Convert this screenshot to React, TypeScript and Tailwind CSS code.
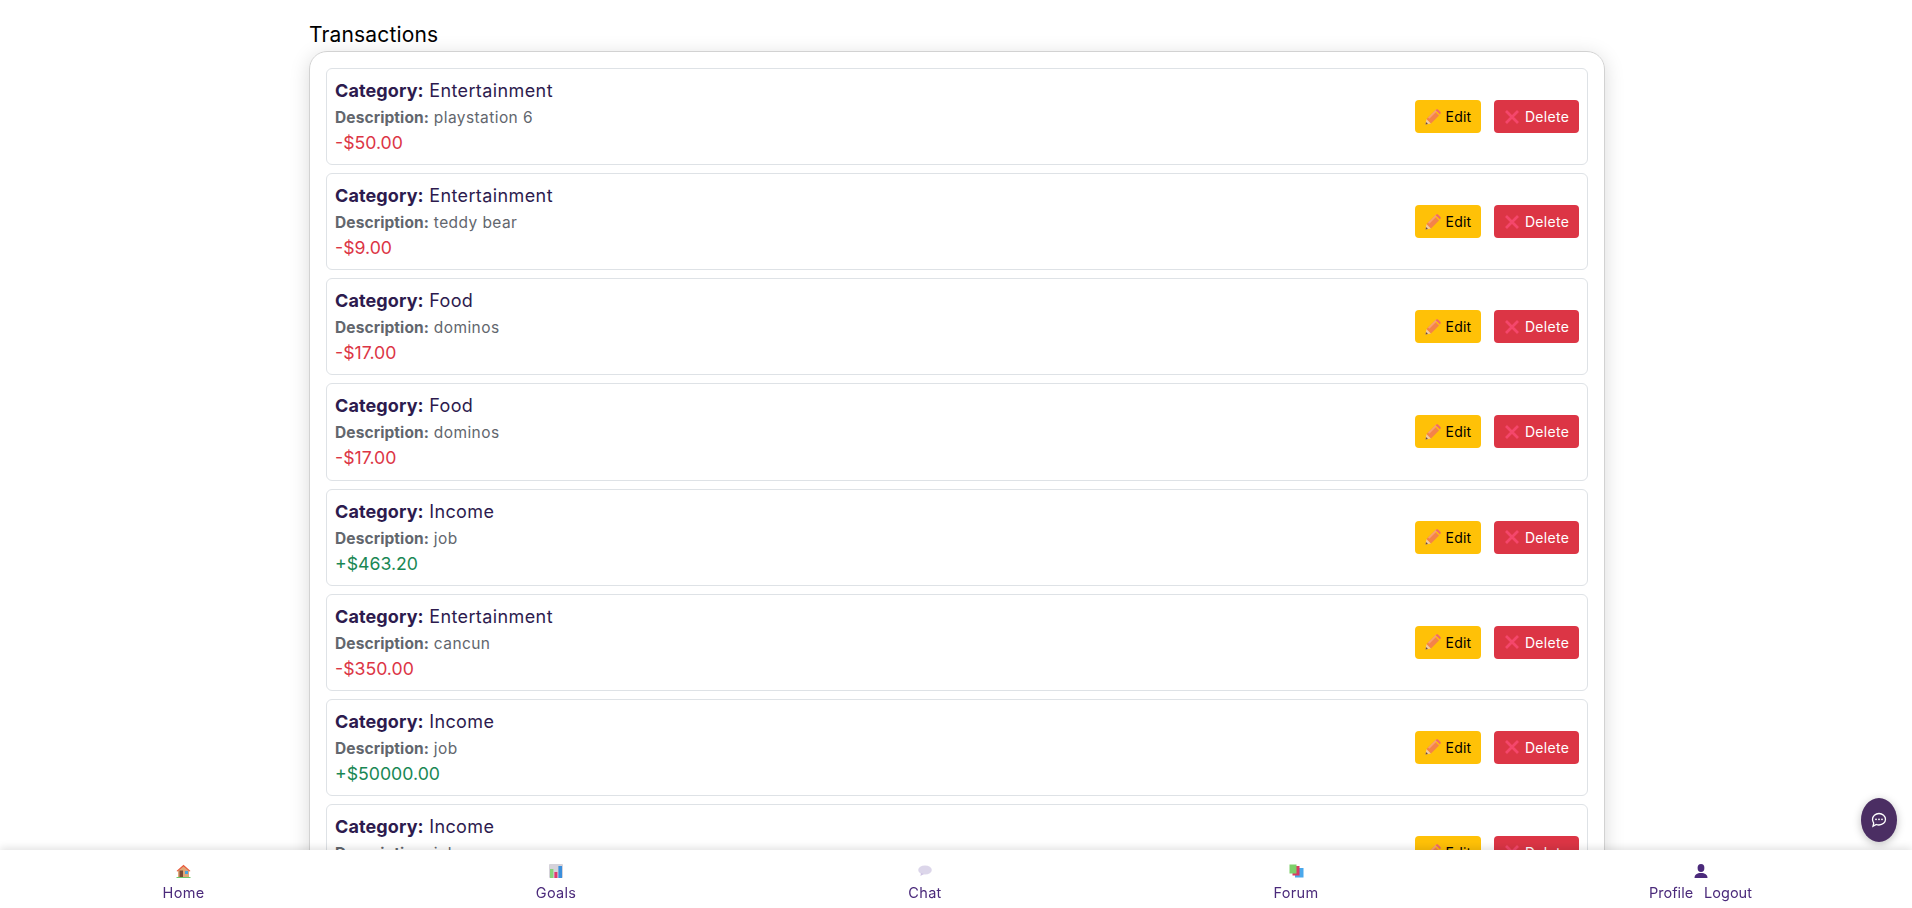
const FONT = "font-['Inter',sans-serif]";

const TRANSACTIONS = [
  { category: 'Entertainment', description: 'playstation 6', amount: '-$50.00', income: false },
  { category: 'Entertainment', description: 'teddy bear', amount: '-$9.00', income: false },
  { category: 'Food', description: 'dominos', amount: '-$17.00', income: false },
  { category: 'Food', description: 'dominos', amount: '-$17.00', income: false },
  { category: 'Income', description: 'job', amount: '+$463.20', income: true },
  { category: 'Entertainment', description: 'cancun', amount: '-$350.00', income: false },
  { category: 'Income', description: 'job', amount: '+$50000.00', income: true },
  { category: 'Income', description: 'job', amount: '+$463.20', income: true },
];

function PencilIcon() {
  return (
    <svg width="16" height="16" viewBox="0 0 16 16" className="shrink-0">
      <path d="M0.500 15.500l1-5.500 4.500 4.500z" fill="#f3c9a0" />
      <path d="M0.500 15.500l.5-2.500 2 2z" fill="#6b4a3a" />
      <path d="M1.500 10L9.500 2l4.500 4.500-8 8z" fill="#f4834a" />
      <path d="M3 8.500L11 .5l1.300 1.300-8 8z" fill="#f9a36e" />
      <path d="M10.500 1l1-.6c.5-.3 1.100-.3 1.500.1l2.500 2.500c.4.4.4 1 .1 1.500l-.6 1z" fill="#ef6a6a" />
    </svg>
  );
}

function CrossIcon() {
  return (
    <svg width="16" height="16" viewBox="0 0 16 16" className="shrink-0">
      <path d="M2 2l12 12M14 2L2 14" stroke="#f4476b" strokeWidth="2.800" />
    </svg>
  );
}

function HomeIcon() {
  return (
    <svg width="15" height="14" viewBox="0 0 15 14">
      <path d="M2 6.500L7.500 2 13 6.500V13H2z" fill="#e0a878" />
      <path d="M0.500 7L7.500 0.800 14.500 7l-1 .6L7.500 2.400 1.500 7.600z" fill="#e8593a" />
      <rect x="3.500" y="6.500" width="3.500" height="6.500" fill="#7a4a35" />
      <rect x="9" y="7" width="3" height="3" fill="#4aa3e0" />
      <rect x="0.500" y="13" width="14" height="1" fill="#6cc96c" />
    </svg>
  );
}

function ChartIcon() {
  return (
    <svg width="14" height="14" viewBox="0 0 14 14">
      <rect width="14" height="14" rx="1" fill="#d5d2da" />
      <rect x="1" y="5" width="3.400" height="9" fill="#86d47a" />
      <rect x="5.400" y="8" width="3" height="6" fill="#e0386f" />
      <rect x="9.400" y="2" width="3.600" height="12" fill="#3a8fdc" />
    </svg>
  );
}

function BalloonIcon() {
  return (
    <svg width="14" height="12" viewBox="0 0 14 12">
      <ellipse cx="7" cy="5" rx="6.800" ry="4.600" fill="#dcd6ea" />
      <path d="M3 8l-.6 3L6 9z" fill="#cfc4e4" />
    </svg>
  );
}

function BooksIcon() {
  return (
    <svg width="15" height="14" viewBox="0 0 15 14">
      <rect x="6" y="4" width="8.500" height="9.500" fill="#4aa8ec" />
      <rect x="3.500" y="2" width="7" height="9.500" fill="#d93a63" />
      <rect x="0.500" y="0.500" width="7" height="9" fill="#7ed06a" />
    </svg>
  );
}

function PersonIcon() {
  return (
    <svg width="14" height="14" viewBox="0 0 14 14">
      <ellipse cx="7" cy="4" rx="3.400" ry="4" fill="#4b2a7b" />
      <path d="M0.500 14c0-3.200 2.600-5 6.500-5s6.500 1.800 6.500 5z" fill="#4b2a7b" />
    </svg>
  );
}

function NavItem({ icon, label, width }: { icon: React.ReactNode; label: string; width: string }) {
  return (
    <div className={`flex flex-col items-center ${width}`}>
      <div className="flex h-[18px] items-center">{icon}</div>
      <span className="mt-[2px] whitespace-nowrap text-[14.5px] leading-[21px] tracking-[0.3px] text-[#4b2a7b]">{label}</span>
    </div>
  );
}

export default function App() {
  return (
    <div className={`h-screen overflow-hidden bg-white ${FONT}`}>
      <div className="ml-[309px] w-[1296px] pt-[23px]">
        <h2 className="mb-[4px] text-[21px] leading-[24px] tracking-[0.15px] text-black">Transactions</h2>
        <div className="rounded-[18px] border border-[#d2d2d2] px-[16px] pt-[16px] shadow-[0_4px_20px_rgba(0,0,0,0.15)]">
          {TRANSACTIONS.map((t, i) => (
            <div key={i} className="mb-[8px] flex h-[97.14px] items-center justify-between rounded-[6px] border border-[#dee2e6] pl-[8px] pr-[8px]">
              <div>
                <div className="mb-[2px] pt-[1px] text-[18px] leading-[26px] tracking-[0.4px] text-[#2d1b4e]">
                  <strong className="font-bold tracking-[0.1px]">Category:</strong> {t.category}
                </div>
                <div className="mt-[1px] text-[15.500px] leading-[23px] tracking-[0.42px] text-[#62666d]">
                  <strong className="font-bold tracking-[0.1px]">Description:</strong> {t.description}
                </div>
                <div className={`mt-[1px] text-[17.700px] leading-[26px] ${t.income ? 'text-[#198754]' : 'text-[#dc3545]'}`}>{t.amount}</div>
              </div>
              <div className="flex gap-[13px]">
                <button className="flex h-[33px] w-[66px] items-center justify-center gap-[5px] rounded-[4px] bg-[#ffc107] text-[14px] tracking-[0.2px] text-black">
                  <PencilIcon />
                  Edit
                </button>
                <button className="flex h-[33px] w-[85px] items-center justify-center gap-[5px] rounded-[4px] bg-[#dc3545] text-[14px] tracking-[0.3px] text-white">
                  <CrossIcon />
                  Delete
                </button>
              </div>
            </div>
          ))}
        </div>
      </div>

      <button className="fixed bottom-[66px] right-[15px] flex h-[44px] w-[36px] items-center justify-center rounded-[50%] bg-[#4b2e63] shadow-[0_2px_8px_rgba(0,0,0,0.25)]">
        <svg width="16" height="16" viewBox="0 0 16 16">
          <path d="M8 1.500c3.600 0 6.500 2.600 6.500 5.800S11.600 13 8 13c-1 0-1.900-.2-2.700-.5L2 14.200l.7-3.100C2 10 1.500 8.700 1.500 7.300 1.500 4.100 4.400 1.500 8 1.500z" fill="none" stroke="white" strokeWidth="1.300" />
          <circle cx="5" cy="7.300" r="0.900" fill="white" />
          <circle cx="8" cy="7.300" r="0.900" fill="white" />
          <circle cx="11" cy="7.300" r="0.900" fill="white" />
        </svg>
      </button>

      <nav className="fixed inset-x-0 bottom-0 flex h-[58px] items-center justify-between bg-white pl-[163px] pr-[161px] pt-[6px] shadow-[0_-2px_8px_rgba(0,0,0,0.12)]">
        <NavItem icon={<HomeIcon />} label="Home" width="w-[41px]" />
        <NavItem icon={<ChartIcon />} label="Goals" width="w-[40px]" />
        <NavItem icon={<BalloonIcon />} label="Chat" width="w-[34px]" />
        <NavItem icon={<BooksIcon />} label="Forum" width="w-[44px]" />
        <div className="flex w-[101px] flex-col items-center">
          <div className="flex h-[18px] items-center"><PersonIcon /></div>
          <div className="mt-[2px] flex gap-[11px] whitespace-nowrap text-[14.500px] leading-[21px] text-[#4b2a7b]">
            <span>Profile</span>
            <span>Logout</span>
          </div>
        </div>
      </nav>
    </div>
  );
}
